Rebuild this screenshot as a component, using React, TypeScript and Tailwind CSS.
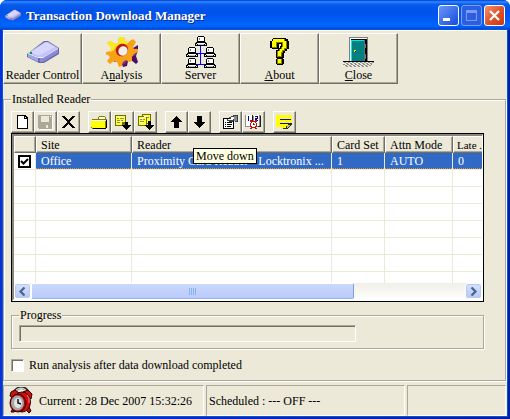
import React, { useState } from "react";

type IconProps = { className?: string };

function ReaderIcon({ className }: IconProps) {
  return (
    <svg className={className} viewBox="0 0 32 24" aria-hidden="true">
      <path d="M0 14 17 1h4l11 7v6L17 23h-5L0 17z" fill="#6868a8" />
      <path d="M1 13 18 2h3l10 6-15 9H11z" fill="#c4c4fc" />
      <path d="M4 12 18 3h3l7 4-15 8H10z" fill="#d6d6ff" />
      <path d="M1 14l10 4v4L1 17z" fill="#a4a4e8" />
      <path d="M12 18h4l15-9v4l-15 9h-4z" fill="#8a8ad8" />
      <path d="M1 13.500 11 17.500h5L31 8.500" fill="none" stroke="#f0f0ff" />
      <path d="M3 12h2v2H3z" fill="#00a030" />
      <path d="M12 18v4" stroke="#585890" />
    </svg>
  );
}

function GearIcon() {
  return (
    <svg width="32" height="32" viewBox="0 0 32 32" aria-hidden="true">
      <path
        fill="#4a1068"
        d="M7 22l4-3 3 3 1 4 2 5 4-1 1-5 3-1 5 4 2-2-2-6 1-3 1-2V9l-5 3-1 5-6 6z"
      />
      <path
        fill="#8c3478"
        d="M8 26l-1-5 5-2 2 4h3l3 1 3-2 2-5 3-4 3-1-2 4 1 3-3 1-3-1-1 5-2 1-3 4-2-5-3 1z"
      />
      <path
        fill="#f8a018"
        d="M0 16l5-1 1-3-5-5 3-2 6 3 2-1 1-6 5 0 1 4 3 1 5-3 3 3-3 5 1 2 4 0v3l-4 2-2 3 0 4-3 1-3-2-3 2-1 4-3 1-2-5-3-1-4 3-3-3 3-4-2-2-4-1z"
      />
      <path
        fill="#fce820"
        d="M1 7l3-2 6 3 2-1 1-6 5 0 1 4 3 1 3-2-4 4-7 1-4 2-3 4-3 1 1-4z"
      />
      <ellipse cx="16" cy="14" rx="6" ry="6.500" fill="#b81818" transform="rotate(35 16 14)" />
      <ellipse cx="17" cy="15" rx="4.500" ry="5" fill="#f4efe4" transform="rotate(35 17 15)" />
    </svg>
  );
}

function Computer({ x, y }: { x: number; y: number }) {
  return (
    <g transform={`translate(${x} ${y})`}>
      <path d="M3 0h6v1h1v5h1v1h1v3H0V7h1V6h1V1h1z" fill="#000" />
      <path d="M3 1h6v4H3zM2 7h8v1H2zM1 8h1v1H1zM10 8h1v1h-1z" fill="#fff" />
      <path d="M4 2h4v2H4z" fill="#808080" />
      <path d="M5 2h3v2H5z" fill="#fff" />
      <path d="M3 8h6v1H3z" fill="#c0c0c0" />
    </g>
  );
}

function ServerIcon() {
  return (
    <svg width="32" height="32" viewBox="0 0 32 32" shapeRendering="crispEdges" aria-hidden="true">
      <path d="M15 9h1v20h-1zM9 17h13v1H9zM11 28h10v1H11z" fill="#00f" />
      <Computer x={10} y={0} />
      <Computer x={1} y={11} />
      <Computer x={19} y={11} />
      <Computer x={1} y={22} />
      <Computer x={19} y={22} />
    </svg>
  );
}

function QuestionIcon() {
  return (
    <svg width="32" height="32" viewBox="0 0 32 32" shapeRendering="crispEdges" aria-hidden="true">
      <path
        fill="#000"
        d="M9 2h13v1h2v2h1v8h-2v2h-2v2h-1v5h-8v-8h2v-2h2v-2h1V8h-2v5H8v-1H6V5h2V3h1zM13 22h6v1h1v5h-1v1h-6v-1h-1v-5h1z"
      />
      <path
        fill="#808000"
        d="M9 3h12v2h2v8h-2v2h-2v2h-1v4h-5v-6h2v-2h2v-2h1V7h-5v5H8V5h1zM13 23h5v5h-5z"
      />
      <path
        fill="#ff0"
        d="M9 3h11v2h2v7h-2v2h-2v2h-1v4h-3v-5h2v-2h2v-2h1V6h-7v5H8V5h1zM14 23h3v4h-3z"
      />
    </svg>
  );
}

function DoorIcon() {
  return (
    <svg width="32" height="32" viewBox="0 0 32 32" shapeRendering="crispEdges" aria-hidden="true">
      <path d="M6 1h18v25H6z" fill="#fff" />
      <path d="M6 1h19v25h-1V2H7v24H6z" fill="#808080" />
      <path d="M8 3h16v23H8zM0 25h31v1H0z" fill="#000" />
      <path d="M8 4h14v21H8z" fill="#008080" />
      <path d="M8 4h13v1H9v20H8z" fill="#00e8e8" />
      <path d="M21 5h1v3h1v4h-1v6h1v5h-1v2h-1z" fill="#707070" />
      <path d="M11 14h2v2h-2z" fill="#ff0" />
      <path d="M12 15h1v1h-1z" fill="#000" />
      <path d="M1 26.500h30M0 28.500h29M3 30.500h22" stroke="#909090" strokeDasharray="2 2" />
      <path d="M3 27.500h27M2 29.500h26" stroke="#909090" strokeDasharray="2 2" />
    </svg>
  );
}

function Glyph({ children }: { children: React.ReactNode }) {
  return (
    <svg width="17" height="16" viewBox="0 0 17 16" shapeRendering="crispEdges" aria-hidden="true">
      {children}
    </svg>
  );
}

const NewGlyph = () => (
  <Glyph>
    <path d="M3 1h8l3 3v11H3z" fill="#000" />
    <path d="M4 2h6v3h3v9H4z" fill="#fff" />
    <path d="M11 3h1v1h-1z" fill="#fff" />
  </Glyph>
);

const SaveGlyph = () => (
  <Glyph>
    <path d="M2 2h14v14H3z" fill="#fff" />
    <path d="M1 1h14v14H2l-1-1z" fill="#aca899" />
    <path d="M4 2h8v6H4zM9 11h2v3H9z" fill="#ece9d8" />
    <path d="M13 2h1v1h-1z" fill="#fff" />
  </Glyph>
);

const DeleteGlyph = () => (
  <Glyph>
    <path d="M3 2l11 12M14 2L3 14" stroke="#000" strokeWidth="2.200" />
  </Glyph>
);

const FolderGlyph = () => (
  <Glyph>
    <path d="M7 3h1V2h6v1h1v2h1v9h-1v1H1v-1H0V7h1V5h6z" fill="#808000" />
    <path d="M8 3h6v2H8zM1 6h14v1H1z" fill="#fff" />
    <path d="M0 7h14v7H1v-1H0z" fill="#ff0" />
    <path d="M15 6h1v8h-1v1H2v-1h13z" fill="#000" />
  </Glyph>
);

const DownNoteGlyph = () => (
  <Glyph>
    <path d="M1 1h11v8l-3 3H1z" fill="#707000" />
    <path d="M2 2h9v6H8v3H2z" fill="#ffff30" />
    <path d="M3 4h2v1H3zM6 4h4v1H6zM3 6h3v1H3zM7 6h2v1H7zM3 8h3v1H3z" fill="#909040" />
    <path d="M4 3h3v1H4zM8 3h2v1H8zM4 7h4v1H4z" fill="#fff" />
    <path d="M11 8h3v3h3v1h-1v1h-1v1h-1v1h-1v1h-1v-1h-1v-1h-1v-1H9v-1H8v-1h3z" fill="#000" />
  </Glyph>
);

const DownNotesGlyph = () => (
  <Glyph>
    <path d="M5 0h9v10H5z" fill="#707000" />
    <path d="M6 1h7v8H6z" fill="#ffff30" />
    <path d="M1 2h9v10H1z" fill="#707000" />
    <path d="M2 3h7v8H2z" fill="#ffff30" />
    <path d="M3 5h2v1H3zM6 5h2v1H6zM3 7h4v1H3zM10 3h2v1h-2z" fill="#909040" />
    <path d="M3 4h4v1H3zM3 8h3v1H3zM7 2h4v1H7z" fill="#fff" />
    <path d="M11 7h3v4h3v1h-1v1h-1v1h-1v1h-1v1h-1v-1h-1v-1h-1v-1H9v-1H8v-1h3z" fill="#000" />
  </Glyph>
);

const UpGlyph = () => (
  <Glyph>
    <path d="M8 2h1v1h1v1h1v1h1v1h1v1h1v1h-3v6H6V8H3V7h1V6h1V5h1V4h1V3h1z" fill="#000" />
  </Glyph>
);

const DownGlyph = () => (
  <Glyph>
    <path d="M6 2h5v6h3v1h-1v1h-1v1h-1v1h-1v1H9v1H8v-1H7v-1H6v-1H5v-1H4V9H3V8h3z" fill="#000" />
  </Glyph>
);

const PropertiesGlyph = () => (
  <Glyph>
    <path d="M1 4h11v11H1z" fill="#000" />
    <path d="M2 5h9v9H2z" fill="#fff" />
    <path d="M3 8h1v1H3zM5 8h5v1H5zM3 10h1v1H3zM5 10h5v1H5zM3 12h1v1H3zM5 12h4v1H5z" fill="#000" />
    <path d="M5 5h2V3h2V2h2V1h5v7h-3V7h-2v1H7V7H5z" fill="#404040" />
    <path d="M6 5h3V3h4v2h-2v1H6z" fill="#fff" />
    <path d="M12 2h3v5h-3z" fill="#8088a0" />
  </Glyph>
);

const ScheduleGlyph = () => (
  <Glyph>
    <path d="M0 1h7v1h2V1h7v12H0z" fill="#909090" />
    <path d="M1 1h6v11H1zM9 1h5v11H9z" fill="#fff" />
    <path d="M3 2h1v5H3zM10 2h3v3h-1v1h1v1h-3V4h2V3h-2z" fill="#0000a0" />
    <path d="M7 1h1v6H7zM15 2h1v11h-3v-1h2z" fill="#202020" />
    <path d="M5 6h2v1h3V6h2v2h-1v1h1v4h-1v1h1v1h-2v-1H7v1H5v-1h1v-1H5V9h1V8H5z" fill="#c01010" />
    <path d="M7 8h3v1h1v3h-1v1H7v-1H6V9h1z" fill="#fff" />
    <path d="M8 9h1v1h1v1H8z" fill="#c01010" />
  </Glyph>
);

const MemoGlyph = () => (
  <Glyph>
    <path d="M0 1h16v9h-3v3h-3v2H6v-2H0z" fill="#ff0" />
    <path d="M4 5h11v1H4zM4 9h11v1H4z" fill="#00f" />
    <path d="M16 9v2h-1v1h-1v1h-1v1h-1v1H7v-1h3v-2h2v-2h3V9z" fill="#303000" />
    <path d="M11 11h3v1h-1v1h-1v1h-1z" fill="#c0c0a0" />
  </Glyph>
);

function ClockIcon() {
  return (
    <svg width="24" height="28" viewBox="0 0 24 28" aria-hidden="true">
      <path d="M5 6C8-1 16-1 19 5" fill="none" stroke="#222" strokeWidth="3" />
      <path d="M6 5C9 0 15 0 18 5" fill="none" stroke="#ccc" strokeWidth="1.500" />
      <path d="M1 9 2 5l4-2 4 3-6 5zM14 5l5-2 4 4-1 5z" fill="#d01010" stroke="#200" />
      <path d="M4 21l-2 4h3l3-2M17 23l3 3 2-2-2-4" fill="#b01010" stroke="#200" />
      <ellipse cx="13" cy="15" rx="8.500" ry="10" fill="#d80c0c" stroke="#300" />
      <ellipse cx="9" cy="16" rx="8" ry="9" fill="#a00c0c" stroke="#300" />
      <ellipse cx="8.500" cy="16" rx="6.500" ry="7.500" fill="#a8a8a8" />
      <ellipse cx="9" cy="16" rx="4" ry="5" fill="#e4e4e4" />
      <path d="M9 12v4l3 1" fill="none" stroke="#111" strokeWidth="1.500" />
      <path d="M18 8l2 3v5" fill="none" stroke="#ff8080" />
    </svg>
  );
}

type BigTool = { before: string; hot: string; after: string; icon: React.ReactNode };

const bigTools: BigTool[] = [
  { before: "Reader Control", hot: "", after: "", icon: <ReaderIcon className="h-6 w-8" /> },
  { before: "A", hot: "n", after: "alysis", icon: <GearIcon /> },
  { before: "Server", hot: "", after: "", icon: <ServerIcon /> },
  { before: "", hot: "A", after: "bout", icon: <QuestionIcon /> },
  { before: "", hot: "C", after: "lose", icon: <DoorIcon /> },
];

type SmallTool = { name: string; icon: React.ReactNode; disabled?: boolean };

const smallToolGroups: SmallTool[][] = [
  [
    { name: "New", icon: <NewGlyph /> },
    { name: "Save", icon: <SaveGlyph />, disabled: true },
    { name: "Delete", icon: <DeleteGlyph /> },
  ],
  [
    { name: "Open folder", icon: <FolderGlyph /> },
    { name: "Download", icon: <DownNoteGlyph /> },
    { name: "Download all", icon: <DownNotesGlyph /> },
  ],
  [
    { name: "Move up", icon: <UpGlyph /> },
    { name: "Move down", icon: <DownGlyph /> },
  ],
  [
    { name: "Properties", icon: <PropertiesGlyph /> },
    { name: "Schedule", icon: <ScheduleGlyph /> },
  ],
  [{ name: "Memo", icon: <MemoGlyph /> }],
];

const raised =
  "border border-t-white border-l-white border-r-[#716f64] border-b-[#716f64] shadow-[inset_-1px_-1px_0_#aca899]";
const group =
  "border border-[#aca899] shadow-[inset_1px_1px_0_#fff,1px_1px_0_#fff]";
const panel =
  "border border-t-[#aca899] border-l-[#aca899] border-r-white border-b-white";

const headers = ["", "Site", "Reader", "Card Set", "Attn Mode", "Late ."];
const values = ["Office", "Proximity Card Reader - Locktronix ...", "1", "AUTO", "0"];

function TitleBar() {
  const box = "flex size-[21px] items-center justify-center rounded-[3px] border";
  return (
    <header className="flex h-[30px] items-center rounded-t-[7px] bg-linear-[180deg,#0831d9_0%,#2a8cff_6%,#0a5cf0_14%,#0052e8_35%,#0056f0_55%,#0066ff_85%,#0054e8_93%,#0038c0_100%] pr-[5px] pl-[5px]">
      <ReaderIcon className="h-3 w-4" />
      <h1 className="ml-[5px] flex-1 pt-[2px] text-[13px] leading-4 font-bold text-white [text-shadow:1px_1px_0_#0a2a80]">
        Transaction Download Manager
      </h1>
      <div className="flex gap-[2px]">
        <button aria-label="Minimize" className={`${box} border-white bg-linear-to-br from-[#6a96f8] to-[#1748dc]`}>
          <span className="mt-2 mr-[5px] h-[3px] w-[7px] bg-white" />
        </button>
        <button aria-label="Maximize" disabled className={`${box} border-[#7d9df0] bg-[#2a5fe4]`}>
          <span className="size-[11px] border border-t-[3px] border-[#7d9df0]" />
        </button>
        <button aria-label="Close window" className={`${box} border-white bg-linear-to-br from-[#f0906c] via-[#e2532c] to-[#c8380c]`}>
          <svg width="13" height="13" viewBox="0 0 13 13" aria-hidden="true">
            <path d="M2 2l9 9M11 2l-9 9" stroke="#fff" strokeWidth="2.200" />
          </svg>
        </button>
      </div>
    </header>
  );
}

function ScrollArrow({ label, d }: { label: string; d: string }) {
  return (
    <button
      aria-label={label}
      className="flex w-[17px] shrink-0 items-center justify-center rounded-[3px] border border-white bg-linear-to-b from-[#d5e2ff] to-[#b4c8f6] shadow-[inset_0_0_0_1px_#b8caf4]"
    >
      <svg width="9" height="9" viewBox="0 0 9 9" aria-hidden="true">
        <path d={d} fill="none" stroke="#4d6185" strokeWidth="2.200" />
      </svg>
    </button>
  );
}

function ReaderTable() {
  const [on, setOn] = useState(true);
  const cell = "h-[17px] overflow-hidden border-r border-b border-[#ece9d8] p-0 last:border-r-0";
  return (
    <div className="relative border border-black">
      <div className="border-t-2 border-r border-b-2 border-l-2 border-t-[#8a877a] border-r-white border-b-white border-l-[#8a877a] bg-white">
        <div className="h-[147px] overflow-hidden">
          <table className="w-full table-fixed border-separate border-spacing-0">
            <colgroup>
              <col className="w-[22px]" />
              <col className="w-24" />
              <col className="w-[200px]" />
              <col className="w-[53px]" />
              <col className="w-[68px]" />
              <col />
            </colgroup>
            <thead>
              <tr>
                {headers.map((h, i) => (
                  <th
                    key={i}
                    scope="col"
                    className="h-[17px] border border-t-white border-r-[#716f64] border-b-[#716f64] border-l-white bg-[#ece9d8] p-0 pl-1 text-left leading-[14px] font-normal whitespace-nowrap shadow-[inset_-1px_-1px_0_#aca899] last:border-r-0 last:pl-[3px] last:text-[11px] last:shadow-[inset_0_-1px_0_#aca899]"
                  >
                    {h}
                  </th>
                ))}
              </tr>
            </thead>
            <tbody>
              <tr className="text-white">
                <td className={cell}>
                  <label className="relative ml-1 block size-[13px]">
                    <input
                      type="checkbox"
                      aria-label="Select Office"
                      checked={on}
                      onChange={() => setOn(!on)}
                      className="block size-[13px] appearance-none border-2 border-black bg-white"
                    />
                    {on && (
                      <svg className="pointer-events-none absolute inset-0" width="13" height="13" viewBox="0 0 13 13" aria-hidden="true">
                        <path d="M3 6l2.500 2.500L10 4" fill="none" stroke="#000" strokeWidth="2" />
                      </svg>
                    )}
                  </label>
                </td>
                {values.map((v) => (
                  <td
                    key={v}
                    className="h-[17px] overflow-hidden border-r border-b border-r-[#ece9d8] border-b-[#ece9d8] bg-[#316ac5] p-0 whitespace-nowrap last:border-r-0"
                  >
                    <div className="h-4 border-b border-dotted border-[#ce953a] pl-[5px] leading-4">{v}</div>
                  </td>
                ))}
              </tr>
              {[1, 2, 3, 4, 5, 6, 7].map((r) => (
                <tr key={r}>
                  {headers.map((_, i) => (
                    <td key={i} className={cell} />
                  ))}
                </tr>
              ))}
            </tbody>
          </table>
        </div>
        <div className="flex h-4 bg-linear-to-b from-[#f0efe8] to-[#fefefb]">
          <ScrollArrow label="Scroll left" d="M6.500 0.500l-4 4 4 4" />
          <div className="flex w-[323px] items-center justify-center gap-px rounded-[2px] border border-white border-r-[#7c9fd8] border-b-[#98b4e8] bg-linear-to-b from-[#cad8fd] to-[#bacbfa]">
            {[0, 1, 2, 3].map((n) => (
              <span key={n} className="h-[7px] w-px border-l border-[#8cb0f8] bg-[#eef4fe]" />
            ))}
          </div>
          <div className="flex-1" />
          <ScrollArrow label="Scroll right" d="M2.500 0.500l4 4-4 4" />
        </div>
      </div>
      <div
        role="tooltip"
        className="absolute top-[14px] left-[181px] border border-black bg-[#ffffe1] px-[2px] leading-[14px] whitespace-nowrap"
      >
        Move down
      </div>
    </div>
  );
}

export default function App() {
  return (
    <div className="bg-white font-['Liberation_Serif','Times_New_Roman',serif] text-[12px] leading-[14px] text-black">
      <div className="flex min-h-screen flex-col rounded-t-[7px] bg-linear-to-r from-[#0831d9] to-[#001ea0]">
        <TitleBar />
        <main className="mx-[3px] mb-[3px] flex flex-1 flex-col border-t border-white bg-[#ece9d8] shadow-[0_0_0_1px_#0855dd]">
          <nav className="mt-[2px] flex" aria-label="Main">
            {bigTools.map((t) => (
              <button key={t.before + t.hot} className={`flex h-[51px] w-[79px] flex-col items-center ${raised}`}>
                <span className="mt-[2px] flex h-8 items-center">{t.icon}</span>
                <span className="leading-[14px] whitespace-nowrap">
                  {t.before}
                  <u>{t.hot}</u>
                  {t.after}
                </span>
              </button>
            ))}
          </nav>

          <fieldset className={`mt-2 mr-px flex-1 pr-[21px] pb-[6px] pl-[7px] ${group}`}>
            <legend className="bg-[#ece9d8] px-px">Installed Reader</legend>
            <div className="flex gap-2 pt-[5px]" role="toolbar" aria-label="Reader tools">
              {smallToolGroups.map((g, i) => (
                <div key={i} className="flex">
                  {g.map((t) => (
                    <button
                      key={t.name}
                      aria-label={t.name}
                      disabled={t.disabled}
                      className={`flex h-[22px] w-[23px] items-center justify-center ${raised}`}
                    >
                      {t.icon}
                    </button>
                  ))}
                </div>
              ))}
            </div>

            <ReaderTable />

            <fieldset className={`mt-[6px] pr-[15px] pb-[6px] pl-[7px] ${group}`}>
              <legend className="bg-[#ece9d8] px-px">Progress</legend>
              <div
                role="progressbar"
                aria-label="Progress"
                aria-valuenow={0}
                className="mt-[3px] h-[17px] w-3/4 border border-t-[#aca899] border-r-white border-b-white border-l-[#aca899] shadow-[inset_1px_1px_0_#716f64]"
              />
            </fieldset>

            <label className="mt-2 flex h-4 items-center gap-[5px]">
              <input
                type="checkbox"
                className="size-[13px] appearance-none border border-t-[#aca899] border-r-white border-b-white border-l-[#aca899] bg-white shadow-[inset_1px_1px_0_#716f64]"
              />
              Run analysis after data download completed
            </label>
          </fieldset>

          <footer className="mt-1 flex h-[31px] gap-[2px] pr-px">
            <div className={`flex w-[201px] items-center gap-[6px] pl-[5px] ${panel}`}>
              <ClockIcon />
              <span>Current : 28 Dec 2007 15:32:26</span>
            </div>
            <div className={`flex flex-1 items-center pl-[2px] ${panel}`}>Scheduled : --- OFF ---</div>
            <div className={`w-[99px] ${panel}`} />
          </footer>
        </main>
      </div>
    </div>
  );
}
